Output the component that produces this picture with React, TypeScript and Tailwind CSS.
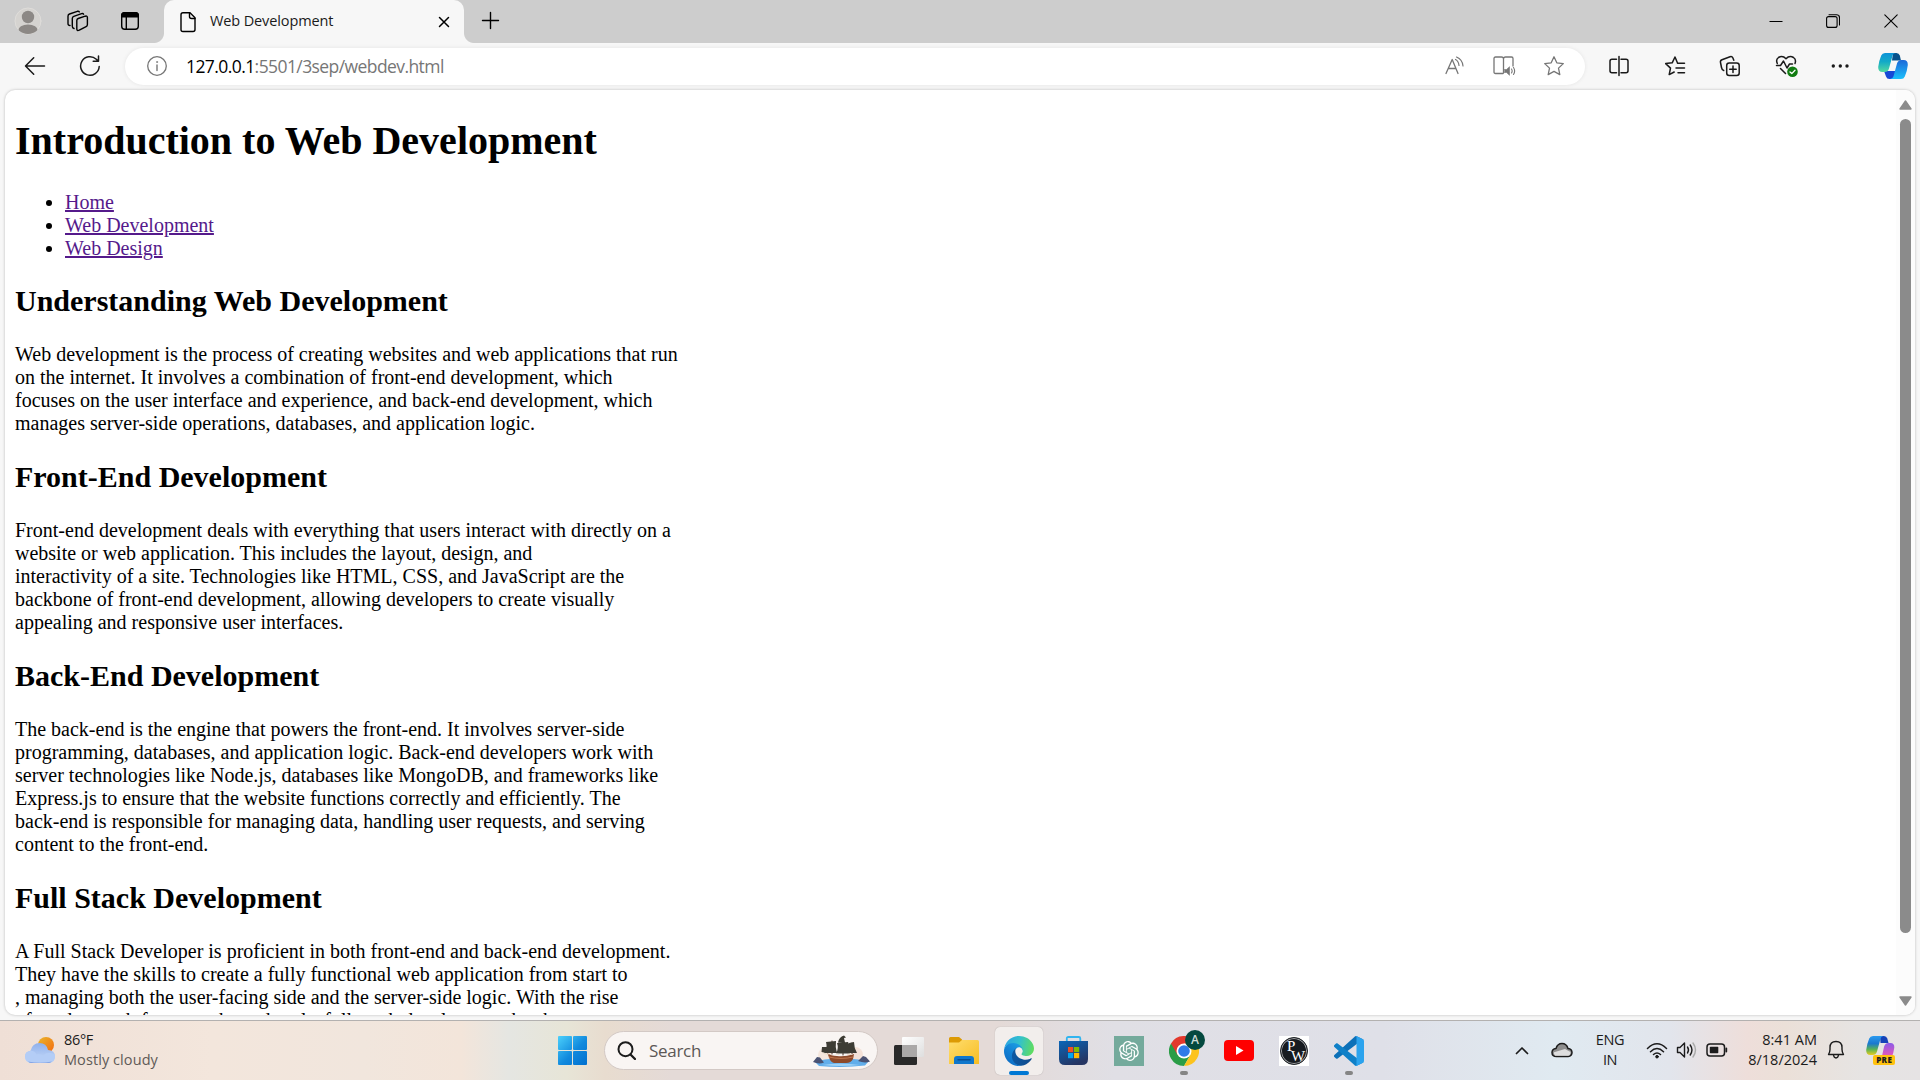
import React from "react";
import { RiOpenaiFill } from "react-icons/ri";

const UI = "font-['Open_Sans','Noto_Sans',sans-serif]";

function Svg({ w, h, vb, className = "", children }: { w: number; h: number; vb?: string; className?: string; children: React.ReactNode }) {
  return (
    <svg width={w} height={h} viewBox={vb ?? `0 0 ${w} ${h}`} className={`shrink-0 ${className}`} fill="none" stroke="currentColor" strokeWidth={1.4} strokeLinecap="round" strokeLinejoin="round">
      {children}
    </svg>
  );
}

function TabStrip() {
  return (
    <div className="flex h-[43px] w-full shrink-0 items-stretch bg-[#cdcdcd] text-black">
      <div className="flex w-[164px] items-center pb-px">
        <Svg w={28} h={28} className="ml-[14px]">
          <clipPath id="avatar"><circle cx="14" cy="14" r="13" /></clipPath>
          <circle cx="14" cy="14" r="13" fill="#d5d3d0" stroke="#dfddda" strokeWidth="1" />
          <g clipPath="url(#avatar)" fill="#8c8885" stroke="none">
            <circle cx="14" cy="10" r="6.2" />
            <ellipse cx="14" cy="24" rx="10" ry="6.600" />
          </g>
        </Svg>
        <Svg w={22} h={22} className="ml-[25px]">
          <path d="M9.800 10.500Q9.800 9 11.200 8.500l7-2.300q2.200-.6 2.200 1.400v7q0 1.500-1.300 2.100l-6.800 3.500Q9.800 21.200 9.800 19z" />
          <path d="M7 18.500q-1.700-.4-1.700-2.200V8.500q0-1.600 1.500-2.200l7.800-2.700q1.500-.4 2 .6" />
          <path d="M3 15.500q-2 0-2-2V6.200q0-1.600 1.500-2.200l7.800-2.700q1.500-.4 2 .6" />
        </Svg>
        <Svg w={20} h={20} className="ml-[31px]">
          <rect x="1.700" y="1.700" width="16.600" height="16.600" rx="3" />
          <path d="M1.700 5.800V4.500q0-2.800 2.800-2.800h11q2.800 0 2.800 2.800v1.300z" fill="currentColor" />
          <path d="M6.300 6v12" />
        </Svg>
      </div>
      <div className="relative flex w-[300px] items-center rounded-t-[10px] bg-[#f7f7f7]">
        <div className="absolute -left-[10px] bottom-0 size-[10px] bg-[radial-gradient(circle_at_0_0,#cdcdcd_9.5px,#f7f7f7_10.5px)]" />
        <div className="absolute -right-[10px] bottom-0 size-[10px] bg-[radial-gradient(circle_at_100%_0,#cdcdcd_9.5px,#f7f7f7_10.5px)]" />
        <Svg w={18} h={22} className="ml-[15px]">
          <path d="M4 1.700h7l5 5v11.800q0 2-2 2H4q-2 0-2-2V3.700q0-2 2-2z" />
          <path d="M10.500 2v3.500q0 2 2 2H16" />
        </Svg>
        <span className={`ml-[13px] w-[220px] pb-[2px] text-[14.5px] tracking-[-0.12px] text-[#1b1b1b] ${UI}`}>Web Development</span>
        <Svg w={12} h={12} className="ml-[8px] mt-px"><path d="M1.500 1.500l9 9m0-9l-9 9" strokeWidth="1.500" /></Svg>
      </div>
      <div className="flex flex-1 items-center pb-px">
        <Svg w={19} h={19} className="mb-px ml-[17px]"><path d="M9.500 1.500v16M1.500 9.500h16" strokeWidth="1.400" /></Svg>
        <div className="flex-1" />
        <Svg w={14} h={14} className="mr-[43px]"><path d="M.5 7.500h13" strokeWidth="1" strokeLinecap="butt" /></Svg>
        <Svg w={14} h={14} className="mr-[44px]">
          <rect x=".6" y="2.600" width="10.500" height="10.800" rx="2" strokeWidth="1.100" />
          <path d="M3 .7h7.500q3 0 3 3V11" strokeWidth="1.100" />
        </Svg>
        <Svg w={14} h={14} className="mr-[22px]"><path d="M.8.8l12.400 12.400M13.200.8L.8 13.200" strokeWidth="1.100" /></Svg>
      </div>
    </div>
  );
}

function Toolbar() {
  return (
    <div className="flex h-[47px] w-full shrink-0 items-center bg-[#f7f7f7] pb-px text-[#1a1a1a]">
      <Svg w={22} h={20} className="ml-[24px]"><path d="M20.500 10H1.700M9.700 1.800L1.500 10l8.200 8.200" strokeWidth="1.500" /></Svg>
      <Svg w={22} h={22} className="ml-[33px]">
        <path d="M20.200 11.500a9.300 9.300 0 1 1-2.900-7.300l2 1.900M19.500 1v5.300h-5.300" strokeWidth="1.500" />
      </Svg>
      <div className="ml-[24px] flex h-[37px] w-[1460px] items-center rounded-full bg-white text-[#767676] shadow-[0_0_4px_rgba(0,0,0,0.08)]">
        <Svg w={22} h={22} className="ml-[21px]">
          <circle cx="11" cy="11" r="9.300" strokeWidth="1.300" />
          <path d="M11 10v5.500" /><circle cx="11" cy="7" r=".6" fill="currentColor" strokeWidth=".6" />
        </Svg>
        <span className={`ml-[18px] whitespace-nowrap text-[17.5px] tracking-[-0.58px] ${UI}`}><span className="text-black">127.0.0.1</span>:5501/3sep/webdev.html</span>
        <div className="flex-1" />
        <Svg w={20} h={20}>
          <path d="M1 17.500L7.200 3.500 13 17.500M3.300 12.500h7.700" strokeWidth="1.300" />
          <path d="M10.500 3.500q3 1.500 3.500 6M11.500 1q6 2.500 6.500 9" strokeWidth="1.200" />
        </Svg>
        <Svg w={24} h={22} className="ml-[27px]">
          <path d="M11.500 4v14M8 18.500H3.500Q2 18.500 2 17V3.500Q2 2 3.500 2h6q2 0 2 2 0-2 2-2h6Q21 2 21 3.500V11M8 18.500h3" strokeWidth="1.300" />
          <path d="M12.500 14.500h2l3-2.800v8.600l-3-2.800h-2z" fill="currentColor" strokeWidth=".6" />
          <path d="M19.500 14q1.300 2 0 4M21.500 12.500q2.300 3.500 0 7" strokeWidth="1.100" />
        </Svg>
        <Svg w={22} h={22} className="ml-[27px] mr-[20px]">
          <path d="M11 1.800l2.800 6 6.500.8-4.800 4.500 1.300 6.500L11 16.400l-5.800 3.200 1.300-6.500L1.700 8.600l6.500-.8z" strokeWidth="1.300" />
        </Svg>
      </div>
      <Svg w={22} h={22} className="ml-[23px]">
        <path d="M8.500 4.200H4q-2 0-2 2v9.600q0 2 2 2h4.500M13 4.200h5q2 0 2 2v9.600q0 2-2 2h-5M11 1.500v19" strokeWidth="1.500" />
      </Svg>
      <Svg w={22} h={22} className="ml-[34px]">
        <path d="M13.500 8L11 2 8.200 7.800 1.700 8.600l4.800 4.500-1.300 6.500 5-2.600M13.500 8.300h7M12 13h8.500M14 17.700h6.500" strokeWidth="1.500" />
      </Svg>
      <Svg w={22} h={22} className="ml-[33px]">
        <rect x="7.700" y="8" width="12.500" height="12.500" rx="2.500" strokeWidth="1.500" />
        <path d="M14 11v6.500M10.700 14.200h6.500M4.700 15.500Q3 15 2.500 12.500l-1-5Q1 5.500 3 4.700l8-3q2-.7 2.800 1l1 2.500" strokeWidth="1.500" />
      </Svg>
      <Svg w={24} h={24} className="ml-[34px]">
        <path d="M2.300 9.500Q.5 5.500 3.500 3.500 7.500 1 11 4.700q3.500-3.700 7.500-1.200 3 2 1.500 6M1.500 11.500h4L8.500 7l3.500 7 2.500-4h3M5.500 14.500l5 5" strokeWidth="1.500" />
        <circle cx="17.500" cy="17.700" r="5.300" fill="#107c10" stroke="none" />
        <path d="M15 18l1.800 1.600 3.200-3.400" stroke="white" strokeWidth="1.300" />
      </Svg>
      <Svg w={18} h={6} className="ml-[32px]">
        <g fill="currentColor" stroke="none"><circle cx="2.300" cy="3" r="1.700" /><circle cx="9.300" cy="3" r="1.700" /><circle cx="16" cy="3" r="1.700" /></g>
      </Svg>
      <CopilotMark />
    </div>
  );
}

function CopilotMark() {
  return (
    <Svg w={30} h={28} className="ml-[29px]">
      <defs>
        <linearGradient id="cpA" x1="0" y1="0" x2="0" y2="1"><stop offset="0" stopColor="#0d93d8" /><stop offset=".45" stopColor="#12a9c8" /><stop offset="1" stopColor="#52d9a0" /></linearGradient>
        <linearGradient id="cpB" x1="0" y1="0" x2="0" y2="1"><stop offset="0" stopColor="#1b68d8" /><stop offset="1" stopColor="#1cc0fb" /></linearGradient>
      </defs>
      <g stroke="none">
        <path d="M15 1h3.500q2.500 0 3.300 2.500L23 8.500h-9z" fill="#07528c" />
        <path d="M6 19l2 5.500q.8 2.500 3.500 2.500H16l2-8z" fill="#1749d6" />
        <path d="M7 1h11q-2.700 0-3.500 2.800L11 16.500Q10 20 6.500 20h-2Q0 20 .2 15q.5-5.500 3-11.500Q4.200 1 7 1z" fill="url(#cpA)" />
        <path d="M23 27H12q2.700 0 3.500-2.800L19 11.500Q20 8 23.500 8h2q4.500 0 4.300 5-.5 5.500-3 11.500Q25.800 27 23 27z" fill="url(#cpB)" />
      </g>
    </Svg>
  );
}

const sections = [
  {
    title: "Understanding Web Development",
    lines: [
      "Web development is the process of creating websites and web applications that run",
      "on the internet. It involves a combination of front-end development, which",
      "focuses on the user interface and experience, and back-end development, which",
      "manages server-side operations, databases, and application logic.",
    ],
  },
  {
    title: "Front-End Development",
    lines: [
      "Front-end development deals with everything that users interact with directly on a",
      "website or web application. This includes the layout, design, and",
      "interactivity of a site. Technologies like HTML, CSS, and JavaScript are the",
      "backbone of front-end development, allowing developers to create visually",
      "appealing and responsive user interfaces.",
    ],
  },
  {
    title: "Back-End Development",
    lines: [
      "The back-end is the engine that powers the front-end. It involves server-side",
      "programming, databases, and application logic. Back-end developers work with",
      "server technologies like Node.js, databases like MongoDB, and frameworks like",
      "Express.js to ensure that the website functions correctly and efficiently. The",
      "back-end is responsible for managing data, handling user requests, and serving",
      "content to the front-end.",
    ],
  },
  {
    title: "Full Stack Development",
    lines: [
      "A Full Stack Developer is proficient in both front-end and back-end development.",
      "They have the skills to create a fully functional web application from start to",
      ", managing both the user-facing side and the server-side logic. With the rise",
      "of modern web frameworks and tools, full stack development has become",
    ],
  },
];

function Page() {
  return (
    <div className="flex h-[930px] w-full shrink-0 bg-[#f7f7f7] px-[5px] pb-[5px]">
      <div className="flex flex-1 overflow-hidden rounded-[10px] bg-white shadow-[0_0_3px_rgba(0,0,0,0.25)]">
        <main className="flex-1 px-[10px] font-['Liberation_Serif',serif] text-[20px] leading-[23px] text-black">
          <h1 className="mt-[28px] text-[40px] font-bold leading-[46px]">Introduction to Web Development</h1>
          <ul className="mb-[24px] mt-[27px] list-disc pl-[50px]">
            {["Home", "Web Development", "Web Design"].map((t) => (
              <li key={t}><a className="text-[#551a8b] underline">{t}</a></li>
            ))}
          </ul>
          {sections.map((s) => (
            <section key={s.title} className="mb-[25px]">
              <h2 className="text-[30px] font-bold leading-[34px]">{s.title}</h2>
              <p className="mt-[25px] whitespace-nowrap">
                {s.lines.map((l) => <span key={l} className="block">{l}</span>)}
              </p>
            </section>
          ))}
        </main>
        <div className="flex w-[19px] flex-col items-center bg-[#fcfcfc] pt-[10px] text-[#8b8b8b]">
          <Svg w={13} h={10}><path d="M6.500 1L12 9H1z" fill="currentColor" /></Svg>
          <div className="mt-[9px] h-[814px] w-[11px] rounded-full bg-[#8b8b8b]" />
          <Svg w={13} h={10} className="mt-[63px]"><path d="M6.500 9L12 1H1z" fill="currentColor" /></Svg>
        </div>
      </div>
    </div>
  );
}

function Ship() {
  return (
    <Svg w={58} h={32}>
      <g stroke="none">
        <circle cx="13" cy="20" r="7" fill="#f5e6dc" /><circle cx="43" cy="20" r="8" fill="#f4e2d8" />
        <path d="M3 27q12-4 26-3 16-1 27 3l-3 3.500q-22 2.500-46 .5z" fill="#62aeea" />
        <path d="M10 30q18-3 38 0-18 2-38 0z" fill="#9ed2f7" />
        <path d="M1 27l4-5 3 .5 4 5q-5 2-11-.5zM46 26l5-5 3 1 4 4.500q-5 2-12-.5z" fill="#4a5272" />
        <path d="M15 18q4 3 10 3 8 1 17-2l-1 5q-2 4-7 4H22q-4-1-5-6z" fill="#8d4a2a" />
        <path d="M17 22q12 3 24 0" stroke="#c1784d" strokeWidth="1" fill="none" />
        <path d="M31 2v18M20 6v13M40 8v11" stroke="#4b3326" strokeWidth="1" />
        <path d="M26 7.500q1-5.500 6-7l2 2-2 .5 1 4.500zM14 7l10-1q-1 6 1 12H12q4-4 2-11zM25 8l11-1q3 5 2 11.500H24q3-5 1-10.500zM37 8l5-1q0 6 3 11h-7zM10 12h5l-.5 6-5-1z" fill="#3d3c34" />
        <path d="M12 18.500l4 1M24 19l3 .5M37 19l3 .5" stroke="#e9ddcc" strokeWidth="1.200" />
      </g>
    </Svg>
  );
}

function AppSlot({ active, mark, children }: { active?: boolean; mark?: boolean; children: React.ReactNode }) {
  return (
    <div className={`relative flex h-[48px] w-[48px] shrink-0 items-center justify-center rounded-[5px] ${active ? "bg-[#f2eeec] shadow-[0_0_1px_rgba(0,0,0,0.3)]" : ""}`}>
      {children}
      {active && <div className="absolute bottom-0 left-[14px] h-[4px] w-[20px] rounded-full bg-[#0078d4]" />}
      {mark && <div className="absolute bottom-0 left-[20px] h-[4px] w-[8px] rounded-full bg-[#858585]" />}
    </div>
  );
}

function EdgeLogo() {
  return (
    <Svg w={30} h={30} vb="0 0 256 256">
      <defs>
        <linearGradient id="e1" x1="60" y1="177" x2="241" y2="177" gradientUnits="userSpaceOnUse"><stop stopColor="#0c59a4" /><stop offset="1" stopColor="#114a8b" /></linearGradient>
        <linearGradient id="e2" x1="150" y1="90" x2="40" y2="230" gradientUnits="userSpaceOnUse"><stop stopColor="#1b9de2" /><stop offset=".5" stopColor="#1282d5" /><stop offset="1" stopColor="#0e6fc6" /></linearGradient>
        <linearGradient id="e3" x1="20" y1="60" x2="250" y2="120" gradientUnits="userSpaceOnUse"><stop stopColor="#2ba7e0" /><stop offset=".45" stopColor="#33c1cc" /><stop offset="1" stopColor="#60dd5d" /></linearGradient>
      </defs>
      <g stroke="none">
        <path fill="url(#e1)" d="M231 190.500c-3.400 1.800-6.900 3.400-10.500 4.700-11.500 4.300-23.700 6.500-35.900 6.500-47.300 0-88.500-32.500-88.500-74.300.1-11.400 6.400-21.900 16.400-27.300-42.800 1.800-53.800 46.400-53.800 72.500 0 74 68.100 81.400 82.800 81.400 7.900 0 19.800-2.300 27-4.600l1.300-.4c27.600-9.500 51-28.100 66.600-52.800 1.200-1.900.6-4.300-1.200-5.500-1.300-.8-2.900-.9-4.200-.2z" />
        <path fill="url(#e2)" d="M105.700 241.400c-8.900-5.500-16.600-12.800-22.700-21.300-26.300-36-18.400-86.500 17.600-112.800 3.800-2.700 7.700-5.200 11.900-7.200 3.100-1.500 8.400-4.100 15.500-4 10.100.1 19.600 4.900 25.700 13 4 5.400 6.300 11.900 6.400 18.700 0-.2 24.500-79.600-80-79.600-43.900 0-80 41.700-80 78.200-.2 19.300 4 38.500 12.100 56 27.600 58.800 94.800 87.600 156.400 67.100-21.100 6.600-44.100 3.700-62.900-8.100z" />
        <path fill="url(#e3)" d="M152.300 148.900c-.9 1-3.400 2.500-3.400 5.600 0 2.600 1.700 5.200 4.800 7.300 14.300 10 41.400 8.600 41.500 8.600 10.700 0 21.100-2.900 30.300-8.300 18.800-11 30.400-31.100 30.400-52.900.3-22.400-8-37.300-11.300-43.900C223.500 23.900 177.700 0 128 0 58 0 1 56.200 0 126.200c.5-36.500 36.800-66 80-66 3.500 0 23.500.3 42 10.100 16.300 8.600 24.900 18.900 30.800 29.200 6.200 10.700 7.300 24.100 7.300 29.500 0 5.300-2.700 13.300-7.800 19.900z" />
      </g>
    </Svg>
  );
}

function Taskbar() {
  return (
    <div className={`flex h-[60px] w-full shrink-0 items-center border-t border-[#b3b1b0] bg-[linear-gradient(90deg,#efdfd6_0%,#f3e6dc_11%,#f1e6dd_19%,#f3e5da_24%,#e5e6e2_26.5%,#e7e5d7_29.5%,#e8dccf_31.5%,#e4dad7_35%,#e4dad7_52%,#e0dfe5_58%,#dfe0e8_72%,#e0eaf1_81%,#e2e5ec_87%,#eededa_91%,#ebe0d8_93%,#e6e4e3_97%,#e6e3e4_100%)] text-[#1c1c1c] ${UI}`}>
      <Svg w={31} h={28} className="mb-px ml-[25px]">
        <defs>
          <linearGradient id="sun" x1="0" y1="0" x2="1" y2="1"><stop stopColor="#e9b62c" /><stop offset="1" stopColor="#f4690f" /></linearGradient>
          <linearGradient id="cloud" x1="0" y1="0" x2="0" y2="1"><stop stopColor="#8fb0ec" /><stop offset="1" stopColor="#c9dcf8" /></linearGradient>
        </defs>
        <g stroke="none">
          <circle cx="21" cy="9" r="8" fill="url(#sun)" />
          <path d="M7 27q-7 0-7-6.500 0-5 5.500-5.800Q7.500 7 14.500 7q7 0 8.500 7 7 .4 7 6.500T23 27z" fill="url(#cloud)" />
          <path d="M7 27q-7 0-7-6.500 0-5 6-5.800 4 .3 5.500 3.800 3.500-1 6.500 1 5-5 12-1v2q0 6.500-7 6.500z" fill="#b4cdf6" />
          <path d="M3 25.500q12 2.500 24 0-2 1.500-4 1.500H7q-2.500 0-4-1.500z" fill="#7fa0e4" />
        </g>
      </Svg>
      <div className="mb-[2px] ml-[8px] w-[110px] text-[14.5px] leading-[20px] tracking-[-0.35px]">
        <div>86°F</div>
        <div className="whitespace-nowrap tracking-[0.08px] text-[#5f5a57]">Mostly cloudy</div>
      </div>
      <Svg w={29} h={29} className="ml-[384px]">
        <defs><linearGradient id="win" x1="0" y1="0" x2="29" y2="29" gradientUnits="userSpaceOnUse"><stop stopColor="#4bd0fb" /><stop offset=".55" stopColor="#1089dd" /><stop offset="1" stopColor="#0070cf" /></linearGradient></defs>
        <g fill="url(#win)" stroke="none"><rect width="14" height="14" rx="1" /><rect x="15" width="14" height="14" rx="1" /><rect y="15" width="14" height="14" rx="1" /><rect x="15" y="15" width="14" height="14" rx="1" /></g>
      </Svg>
      <div className="ml-[17px] flex h-[39px] w-[274px] items-center rounded-full border border-[#d3c9c5] bg-[#f9f5f3]">
        <Svg w={19} h={19} className="ml-[12px]"><circle cx="8.500" cy="8.200" r="7" strokeWidth="2" /><path d="M13.500 13.500l4.500 4.500" strokeWidth="2.300" /></Svg>
        <span className="ml-[13px] text-[17px] tracking-[-0.3px] text-[#5c5856]">Search</span>
        <div className="ml-auto mr-[7px]"><Ship /></div>
      </div>
      <Svg w={30} h={28} className="ml-[16px]">
        <defs><linearGradient id="tv" x1="0" y1="0" x2="1" y2="1"><stop stopColor="#fff" /><stop offset="1" stopColor="#dedede" /></linearGradient></defs>
        <g stroke="none"><rect y="8" width="23" height="20" rx="1.500" fill="#292929" /><rect x="8" width="22" height="20" rx="1" fill="url(#tv)" /><path d="M8 8h15v12H8z" fill="#aaa8a8" /></g>
      </Svg>
      <div className="ml-[16px] flex gap-[7px]">
        <AppSlot>
          <Svg w={30} h={27}>
            <defs><linearGradient id="fo" x1="0" y1="0" x2="1" y2="1"><stop stopColor="#ffdd6e" /><stop offset="1" stopColor="#f7bd22" /></linearGradient></defs>
            <g stroke="none"><path d="M0 1.500Q0 0 1.500 0H10l3 2.500V8H0z" fill="#dc9a05" /><path d="M0 5.500h10L13 3h15.500Q30 3 30 4.500V27H0z" fill="url(#fo)" /><path d="M5 27v-5q0-3 3-3h14q3 0 3 3v5z" fill="#1077cc" /></g>
            <path d="M9 22.800h12" stroke="#0a4f91" />
          </Svg>
        </AppSlot>
        <AppSlot active><EdgeLogo /></AppSlot>
        <AppSlot>
          <Svg w={29} h={29} className="mr-px">
            <defs><linearGradient id="st" x1="0" y1="0" x2=".5" y2="1"><stop stopColor="#0a66b8" /><stop offset="1" stopColor="#253563" /></linearGradient></defs>
            <path d="M7.800 6V2.500Q7.800 1 9.300 1h10.500q1.500 0 1.500 1.500V6" stroke="#31b4ef" strokeWidth="1.800" />
            <path d="M0 5h29v18q0 6-6 6H6q-6 0-6-6z" fill="url(#st)" stroke="none" />
            <g stroke="none"><rect x="9" y="11" width="5.200" height="5.200" fill="#f25022" /><rect x="15" y="11" width="5.200" height="5.200" fill="#7fba00" /><rect x="9" y="17" width="5.200" height="5.200" fill="#00a4ef" /><rect x="15" y="17" width="5.200" height="5.200" fill="#ffb900" /></g>
          </Svg>
        </AppSlot>
        <AppSlot><div className="flex size-[30px] items-center justify-center bg-[#74aa9c] text-white"><RiOpenaiFill size={24} /></div></AppSlot>
        <AppSlot mark>
          <Svg w={30} h={30} vb="0 0 48 48">
            <g stroke="none">
              <path d="M3.200 12A24 24 0 0 0 24 48L34.400 30 24 24z" fill="#2a9d47" />
              <path d="M44.800 12A24 24 0 0 1 24 48L34.400 30 24 12z" fill="#fcc31e" />
              <path d="M3.200 12L13.600 30 24 24 24 12h20.800A24 24 0 0 0 3.200 12z" fill="#e3392d" />
              <circle cx="24" cy="24" r="12" fill="white" /><circle cx="24" cy="24" r="9.300" fill="#2f7be9" />
            </g>
          </Svg>
          <div className="absolute left-[25px] top-[3px] flex size-[20px] items-center justify-center rounded-full bg-[#04493f] text-[12px] font-semibold leading-none text-[#cfdcd8]">A</div>
        </AppSlot>
        <AppSlot><Svg w={30} h={21}><rect width="30" height="21" rx="4" fill="red" stroke="none" /><path d="M12 6l7.500 4.500L12 15z" fill="white" stroke="none" /></Svg></AppSlot>
        <AppSlot>
          <div className="flex size-[30px] items-center justify-center bg-white">
            <div className="flex size-[28px] flex-col rounded-full border border-[#22262a] bg-[#171b20] pt-[2px] font-['Liberation_Serif',serif] text-white ring-1 ring-inset ring-[#a5a7a9]">
              <span className="ml-[6px] h-[10px] text-[15px] leading-[13px]">P</span>
              <span className="ml-[10px] h-[12px] text-[15px] leading-[12px]">W</span>
            </div>
          </div>
        </AppSlot>
        <AppSlot mark>
          <Svg w={30} h={30} vb="0 0 100 100">
            <g stroke="none">
              <path fill="#0c70b8" d="M96.500 10.800L75.900.9C73.500-.3 70.600.2 68.750 2.100L1.300 63.600c-1.800 1.600-1.800 4.500 0 6.100l5.500 5c1.500 1.400 3.700 1.500 5.300.3L93.400 13.400c2.700-2.100 6.600-.1 6.600 3.300 0-2.700-1.400-4.900-3.500-5.900z" />
              <path fill="#0f80c8" d="M96.500 89.200l-20.600 9.900c-2.400 1.200-5.300.7-7.150-1.200L1.300 36.400c-1.800-1.600-1.800-4.500 0-6.100l5.500-5c1.500-1.400 3.700-1.500 5.300-.3l81.300 61.600c2.700 2.100 6.600.1 6.600-3.300 0 2.700-1.400 4.900-3.500 5.900z" />
              <path fill="#2ba3ee" d="M75.860 99.130c-2.390 1.150-5.240.66-7.110-1.210C71.060 100.220 75 98.590 75 95.330V4.670C75 1.410 71.060-.22 68.750 2.080 70.620.21 73.470-.27 75.860.87l20.600 9.910C98.620 11.820 100 14 100 16.410v67.180c0 2.400-1.380 4.590-3.540 5.630z" />
            </g>
          </Svg>
        </AppSlot>
      </div>
      <div className="flex-1" />
      <Svg w={14} h={9} className="mb-px mr-[22px]"><path d="M1.500 7.500L7 2l5.500 5.500" strokeWidth="1.700" /></Svg>
      <Svg w={22} h={16} className="mb-[2px] mr-[22px]">
        <path d="M5.500 14.500q-4.500 0-4.500-4 0-3.500 4-4Q6.500 1.500 11 1.500t6 5q4 .5 4 4t-4 4z" fill="#8e8e8e" strokeWidth="1.500" />
        <path d="M4 13.700q-1.500-1-1-3.500L14 7l5.500 3q0 3.500-2.500 3.700z" fill="#dedede" stroke="none" />
      </Svg>
      <div className="mb-px mr-[21px] w-[30px] text-center text-[14.5px] leading-[20px] tracking-[-0.4px]"><div>ENG</div><div>IN</div></div>
      <Svg w={22} h={17} className="mb-px">
        <path d="M1.500 6.500q9.500-9.500 19 0M4.500 9.700q6.500-6.300 13 0M7.500 12.500q3.500-3 7 0" strokeWidth="1.500" /><circle cx="11" cy="14.700" r="1.300" fill="currentColor" strokeWidth="1" />
      </Svg>
      <Svg w={22} h={18} className="mb-px ml-[8px]">
        <path d="M1.500 6.500H4L8.500 2v14L4 11.500H1.500z" /><path d="M11.500 6q2 3 0 6M14.200 4q3.500 5 0 10" /><path d="M17 2q5 7 0 14" stroke="#aaa" />
      </Svg>
      <Svg w={22} h={14} className="mb-px ml-[8px]">
        <rect x="1" y="1" width="17.500" height="12" rx="3" strokeWidth="1.500" /><rect x="3.800" y="3.700" width="8.500" height="6.600" rx=".7" fill="currentColor" stroke="none" /><path d="M20.300 5.500v3" strokeWidth="1.800" />
      </Svg>
      <div className="mb-[2px] ml-[17px] w-[72px] whitespace-nowrap text-right text-[14.5px] leading-[20px] tracking-[0.02px]">
        <div>8:41 AM</div><div>8/18/2024</div>
      </div>
      <Svg w={18} h={20} className="mb-px ml-[10px]">
        <path d="M1.500 14.500q1.500-2.500 1.500-5V7.500q0-6 6-6t6 6v2q0 2.500 1.500 5z" /><path d="M6.500 15q.5 3 2.500 3t2.500-3" />
      </Svg>
      <Svg w={30} h={29} className="ml-[21px] mr-[24px]">
        <defs>
          <linearGradient id="pa" x1="0" y1="0" x2="0" y2="1"><stop stopColor="#2a9bf0" /><stop offset=".4" stopColor="#1b78cf" /><stop offset=".7" stopColor="#58b356" /><stop offset="1" stopColor="#e7cc20" /></linearGradient>
          <linearGradient id="pb" x1="0" y1="0" x2="0" y2="1"><stop stopColor="#8b5be8" /><stop offset=".6" stopColor="#d657c2" /><stop offset="1" stopColor="#f46a78" /></linearGradient>
        </defs>
        <g stroke="none">
          <path d="M14 0h4q2.500 0 3.300 2.500L22.500 7h-8z" fill="#1542b8" />
          <path d="M7 0h11q-2.700 0-3.500 2.800L11 15.500Q10 19 6.500 19h-2Q0 19 .2 14q.5-5.500 3-11.500Q4.200 0 7 0z" fill="url(#pa)" />
          <path d="M22 25H12q2.700 0 3.500-2.800L18 11q1-4 4.500-4h2q4 0 3.800 4.500-.5 5-3 11Q24.500 25 22 25z" fill="url(#pb)" />
          <rect x="7" y="19" width="22" height="10" rx="2" fill="#ffc20e" />
        </g>
        <text x="18.200" y="26.800" textAnchor="middle" fontSize="8" fontWeight="800" fill="#1c1c1c" stroke="none" letterSpacing=".4">PRE</text>
      </Svg>
    </div>
  );
}

export default function App() {
  return (
    <div className="flex h-[1080px] w-[1920px] flex-col overflow-hidden bg-[#f7f7f7]">
      <TabStrip />
      <Toolbar />
      <Page />
      <Taskbar />
    </div>
  );
}
